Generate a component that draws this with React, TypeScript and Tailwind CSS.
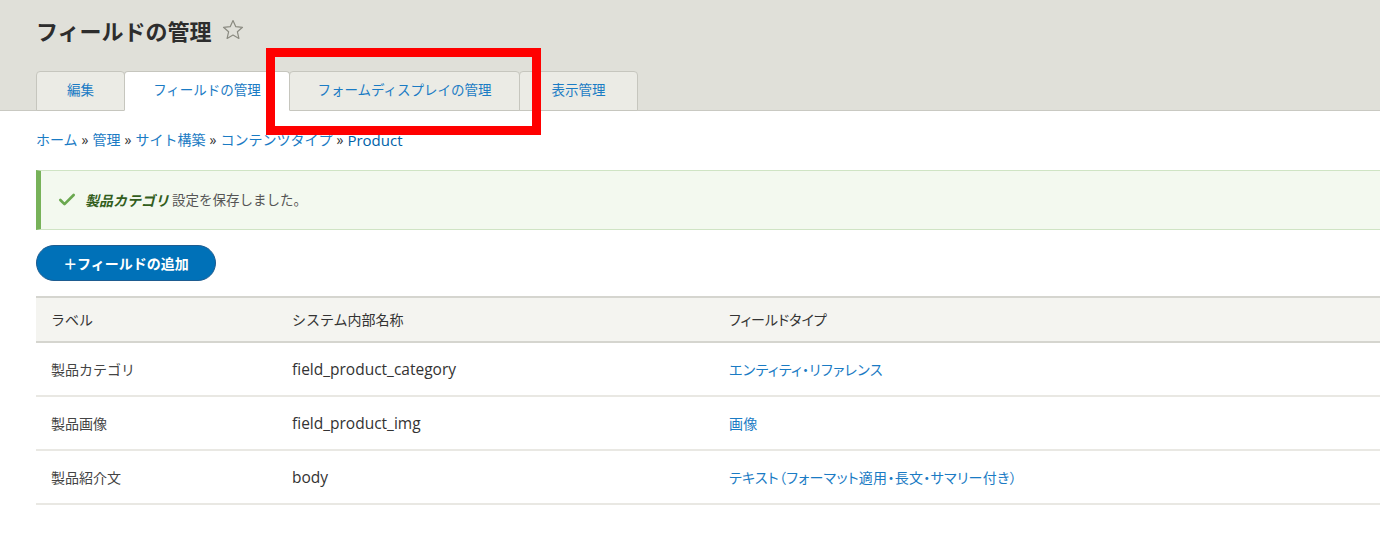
import { Check } from "lucide-react";

const tabs = [
  { label: "編集", w: "w-[89px]", active: false },
  { label: "フィールドの管理", w: "w-[166px]", active: true },
  { label: "フォームディスプレイの管理", w: "w-[231px]", active: false },
  { label: "表示管理", w: "w-[119px]", active: false },
];

const rows = [
  { label: "製品カテゴリ", name: "field_product_category", type: "エンティティ・リファレンス" },
  { label: "製品画像", name: "field_product_img", type: "画像" },
  { label: "製品紹介文", name: "body", type: "テキスト（フォーマット適用・長文・サマリー付き）" },
];

export default function App() {
  return (
    <div
      className="relative w-[1380px] h-[536px] bg-white overflow-hidden text-[14px] text-[#333]"
      style={{ fontFamily: '"Open Sans", "Noto Sans CJK JP", sans-serif' }}
    >
      {/* ヘッダー */}
      <div className="bg-[#e0e0d9] border-b border-[#c9c9c2] h-[111px] pl-[36px] flex flex-col">
        <div className="flex items-center gap-[9px] pt-[4px] h-[57px]">
          <h1 className="text-[22px] font-bold text-[#2d2d2d] leading-none">フィールドの管理</h1>
          <svg width="24" height="24" viewBox="0 0 24 24" className="-mt-[1px]">
            <path
              d="M12 2.5l2.8 6.2 6.7.6-5.1 4.5 1.5 6.6L12 17l-5.9 3.4 1.5-6.6-5.1-4.5 6.7-.6z"
              fill="none"
              stroke="#8a8a80"
              strokeWidth="1.2"
              strokeLinejoin="round"
            />
          </svg>
        </div>
        <div className="flex items-end mt-auto -mb-px">
          {tabs.map((t) => (
            <div
              key={t.label}
              className={`${t.w} h-[40px] pb-[1px] flex items-center justify-center rounded-t-[4px] border border-[#c6c6be] text-[13.5px] text-[#1a7bc4] -mr-px ${
                t.active ? "bg-white border-b-white relative z-10" : "bg-[#ebebe5]"
              }`}
            >
              {t.label}
            </div>
          ))}
        </div>
      </div>

      {/* パンくず */}
      <div className="pl-[36px] pt-[22px] h-[59px] text-[14px] text-[#1a7bc4] leading-none flex items-start">
        <span>ホーム</span>
        <span className="mx-[4px] text-[#333]">»</span>
        <span>管理</span>
        <span className="mx-[4px] text-[#333]">»</span>
        <span>サイト構築</span>
        <span className="mx-[4px] text-[#333]">»</span>
        <span>コンテンツタイプ</span>
        <span className="mx-[4px] text-[#333]">»</span>
        <span className="text-[#0062a8] font-medium text-[15px]">Product</span>
      </div>

      {/* メッセージ */}
      <div className="ml-[36px] h-[60px] flex items-center bg-[#f3f9ef] border-y border-[#cfe4c4] border-l-[5px] border-l-[#77b259] pl-[16px]">
        <Check size={20} strokeWidth={3.2} className="text-[#6aa84f]" />
        <span className="ml-[8px] italic font-bold text-[#325e1c]">製品カテゴリ</span>
        <span className="ml-[3px] text-[#555] text-[13.5px]">設定を保存しました。</span>
      </div>

      {/* ボタン */}
      <div className="pl-[36px] pt-[15px]">
        <button className="w-[180px] h-[36px] rounded-full bg-[#0071b8] border border-[#1e5c90] text-white font-bold text-[14px] flex items-center justify-center">
          ＋フィールドの追加
        </button>
      </div>

      {/* テーブル */}
      <div className="ml-[36px] mt-[15px]">
        <div className="grid grid-cols-[241px_437px_1fr] h-[47px] items-center bg-[#f4f4f0] border-y-2 border-[#d5d5cf] text-[#333]">
          <div className="pl-[15px]">ラベル</div>
          <div className="pl-[15px]">システム内部名称</div>
          <div className="pl-[15px] [font-feature-settings:'palt']">フィールドタイプ</div>
        </div>
        {rows.map((r) => (
          <div
            key={r.name}
            className="grid grid-cols-[241px_437px_1fr] h-[54px] items-center border-b-2 border-[#e9e8e3]"
          >
            <div className="pl-[15px] text-[#444]">{r.label}</div>
            <div className="pl-[15px] pt-[2px] text-[15.5px] text-[#333]">{r.name}</div>
            <div className="pl-[15px] text-[#1a7bc4] [font-feature-settings:'palt'] tracking-[0.3px]">{r.type}</div>
          </div>
        ))}
      </div>

      {/* 強調枠 */}
      <div className="absolute left-[266px] top-[48px] w-[275px] h-[87px] border-[9px] border-[#ff0000] pointer-events-none z-20" />
    </div>
  );
}
